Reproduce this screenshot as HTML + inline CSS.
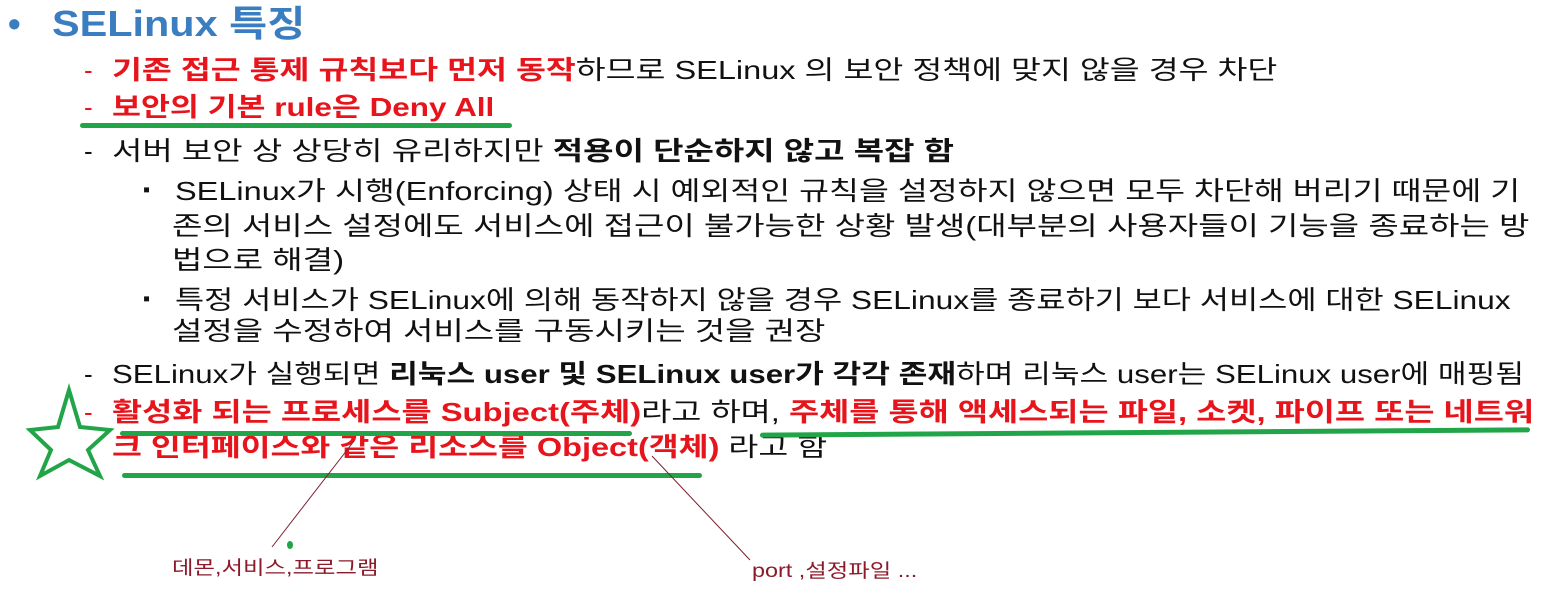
<!DOCTYPE html>
<html><head><meta charset="utf-8"><style>
html,body{margin:0;padding:0;background:#fff;width:1567px;height:592px;overflow:hidden}
body{position:relative;font-family:"Liberation Sans","Noto Sans CJK KR",sans-serif;color:#111}
.l{position:absolute;white-space:nowrap;font-size:26px;line-height:30px;transform-origin:0 0}
.r{color:#e8141b;font-weight:bold}
b{font-weight:bold}
.g{position:absolute;height:5px;background:#22a548;border-radius:3px}
.d{position:absolute;font-size:26px;line-height:30px}
</style></head><body>
<div class="l" style="left:8px;top:4px;font-size:36px;line-height:40px;color:#3a7dc0;font-weight:bold">•</div>
<div class="l" style="left:52px;top:4px;font-size:36px;line-height:40px;color:#3a7dc0;font-weight:bold;transform:scaleX(1.15)">SELinux 특징</div>

<div class="d" style="left:84px;top:55px;color:#e8141b">-</div>
<div class="l" style="left:112px;top:55px;transform:scaleX(1.25)"><span class="r">기존 접근 통제 규칙보다 먼저 동작</span>하므로 SELinux 의 보안 정책에 맞지 않을 경우 차단</div>
<div class="d" style="left:84px;top:92px;color:#e8141b">-</div>
<div class="l" style="left:112px;top:92px;transform:scaleX(1.21)"><span class="r">보안의 기본 rule은 Deny All</span></div>
<div class="g" style="left:80px;top:123px;width:432px"></div>
<div class="d" style="left:84px;top:136px">-</div>
<div class="l" style="left:112px;top:136px;transform:scaleX(1.27)">서버 보안 상 상당히 유리하지만 <b>적용이 단순하지 않고 복잡 함</b></div>

<div class="d" style="left:143px;top:175px;font-size:20px">▪</div>
<div class="l" style="left:175px;top:176px;transform:scaleX(1.25)">SELinux가 시행(Enforcing) 상태 시 예외적인 규칙을 설정하지 않으면 모두 차단해 버리기 때문에 기</div>
<div class="l" style="left:172px;top:211px;transform:scaleX(1.27)">존의 서비스 설정에도 서비스에 접근이 불가능한 상황 발생(대부분의 사용자들이 기능을 종료하는 방</div>
<div class="l" style="left:172px;top:245px;transform:scaleX(1.27)">법으로 해결)</div>
<div class="d" style="left:143px;top:284px;font-size:20px">▪</div>
<div class="l" style="left:175px;top:285px;transform:scaleX(1.22)">특정 서비스가 SELinux에 의해 동작하지 않을 경우 SELinux를 종료하기 보다 서비스에 대한 SELinux</div>
<div class="l" style="left:172px;top:316px;transform:scaleX(1.27)">설정을 수정하여 서비스를 구동시키는 것을 권장</div>

<div class="d" style="left:84px;top:359px">-</div>
<div class="l" style="left:112px;top:359px;transform:scaleX(1.2)">SELinux가 실행되면 <b>리눅스 user 및 SELinux user가 각각 존재</b>하며 리눅스 user는 SELinux user에 매핑됨</div>
<div class="d" style="left:84px;top:397px;color:#e8141b">-</div>
<div class="l" style="left:112px;top:397px;transform:scaleX(1.26)"><span class="r">활성화 되는 프로세스를 Subject(주체)</span>라고 하며, <span class="r">주체를 통해 액세스되는 파일, 소켓, 파이프 또는 네트워</span></div>
<div class="l" style="left:112px;top:432px;transform:scaleX(1.25)"><span class="r">크 인터페이스와 같은 리소스를 Object(객체)</span> 라고 함</div>
<div class="g" style="left:120px;top:431px;width:512px"></div>
<div class="g" style="left:760px;top:430px;width:770px;transform:rotate(-0.4deg)"></div>
<div class="g" style="left:122px;top:473px;width:580px"></div>
<svg style="position:absolute;left:0;top:0" width="1567" height="592">
<polygon points="69,390 80,427 110,430 88,450 100,476 69,460 40,476 51,450 30,430 58,427" fill="none" stroke="#22a548" stroke-width="4"/>
<line x1="354" y1="441" x2="272" y2="547" stroke="#7a2030" stroke-width="1"/>
<line x1="652" y1="456" x2="750" y2="560" stroke="#7a2030" stroke-width="1"/>
<ellipse cx="290" cy="545" rx="3" ry="4" fill="#22a548"/>
</svg>
<div class="l" style="left:172px;top:557px;font-size:19px;line-height:24px;color:#8b1a2a;transform:scaleX(1.23)">데몬,서비스,프로그램</div>
<div class="l" style="left:752px;top:560px;font-size:19px;line-height:24px;color:#8b1a2a;transform:scaleX(1.23)">port ,설정파일 ...</div>
</body></html>
